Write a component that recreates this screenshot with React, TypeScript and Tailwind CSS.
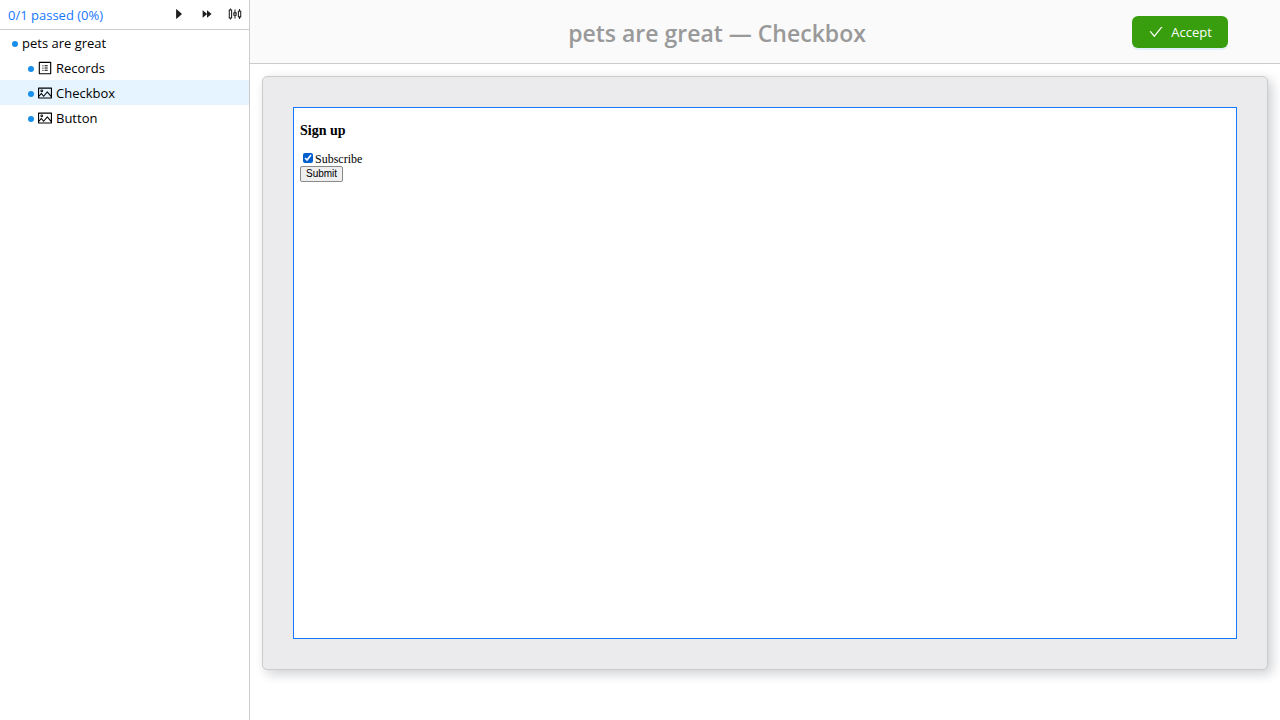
import { useState } from "react";
import {
  AiOutlineCaretRight,
  AiOutlineCheck,
  AiOutlineForward,
  AiOutlinePicture,
  AiOutlineProfile,
  AiOutlineSliders,
} from "react-icons/ai";
import type { IconType } from "react-icons";

type TreeItem = { name: string; icon: IconType };

const items: TreeItem[] = [
  { name: "Records", icon: AiOutlineProfile },
  { name: "Checkbox", icon: AiOutlinePicture },
  { name: "Button", icon: AiOutlinePicture },
];

const actions: { label: string; icon: IconType; size: number }[] = [
  { label: "Run", icon: AiOutlineCaretRight, size: 14 },
  { label: "Run all", icon: AiOutlineForward, size: 14 },
  { label: "Settings", icon: AiOutlineSliders, size: 16 },
];

function Dot() {
  return <span className="mt-0.5 size-1.5 shrink-0 rounded-full bg-[#1890eb]" />;
}

function Sidebar({ selected, onSelect }: { selected: string; onSelect: (name: string) => void }) {
  return (
    <aside className="w-[250px] shrink-0 border-r border-[#ccc] bg-white">
      <div className="flex h-[30px] items-center border-b border-[#ccc] pl-2">
        <a href="#results" className="grow text-[#1677ff]">
          0/1 passed (0%)
        </a>
        {actions.map(({ label, icon: Icon, size }) => (
          <button key={label} type="button" aria-label={label} className="flex h-7 w-7 items-center justify-center pb-0.5 text-[#1f1f1f]">
            <Icon size={size} />
          </button>
        ))}
      </div>
      <nav>
        <div className="flex h-[25px] items-center gap-1 pl-3">
          <Dot />
          <span>pets are great</span>
        </div>
        <ul>
          {items.map(({ name, icon: Icon }) => (
            <li key={name}>
              <button
                type="button"
                onClick={() => onSelect(name)}
                className={`flex h-[25px] w-full items-center gap-[3px] pl-7 ${name === selected ? "bg-[#e6f4ff]" : ""}`}
              >
                <Dot />
                <Icon size={16} />
                <span>{name}</span>
              </button>
            </li>
          ))}
        </ul>
      </nav>
    </aside>
  );
}

function Preview() {
  const [subscribed, setSubscribed] = useState(true);
  return (
    <section className="m-3 flex h-[594px] rounded-[5px] border border-[#ccc] bg-[#ebebed] p-[30px] shadow-[4px_4px_12px_rgba(0,20,40,0.2)]">
      <form
        onSubmit={(event) => event.preventDefault()}
        className="grow border border-[#1677ff] bg-white px-1.5 pt-[15px] font-['Liberation_Serif',serif] text-[12px] leading-[14px] text-black"
      >
        <h3 className="mb-3.5 text-[14px] leading-[15px] font-bold">Sign up</h3>
        <label className="flex h-3.5 items-center pl-[3px]">
          <input
            type="checkbox"
            checked={subscribed}
            onChange={(event) => setSubscribed(event.target.checked)}
            className="mr-[2px] mb-0.5 size-2.5 accent-[#005fcc]"
          />
          Subscribe
        </label>
        <button
          type="submit"
          className="block h-4 rounded-xs border border-[#8a8a8a] bg-[#efefef] px-[5px] font-['Liberation_Sans',sans-serif] text-[10px] leading-[14px]"
        >
          Submit
        </button>
      </form>
    </section>
  );
}

export default function App() {
  const [selected, setSelected] = useState("Checkbox");
  return (
    <div className="flex min-h-screen bg-white font-['Open_Sans',sans-serif] text-[13px] leading-[22px] text-black">
      <Sidebar selected={selected} onSelect={setSelected} />
      <main className="min-w-0 grow">
        <header className="flex h-16 items-center border-b border-[#ccc] bg-[#fafafa] pr-[52px]">
          <h1 className="grow pt-0.5 pl-[52px] text-center text-[23px] leading-8 font-semibold text-[#999]">pets are great — {selected}</h1>
          <button
            type="button"
            className="flex h-8 w-24 items-center justify-center gap-[7px] rounded-md bg-[#389e0d] text-white shadow-[0_2px_0_rgba(5,145,255,0.1)]"
          >
            <AiOutlineCheck size={16} />
            <span>Accept</span>
          </button>
        </header>
        <Preview />
      </main>
    </div>
  );
}
